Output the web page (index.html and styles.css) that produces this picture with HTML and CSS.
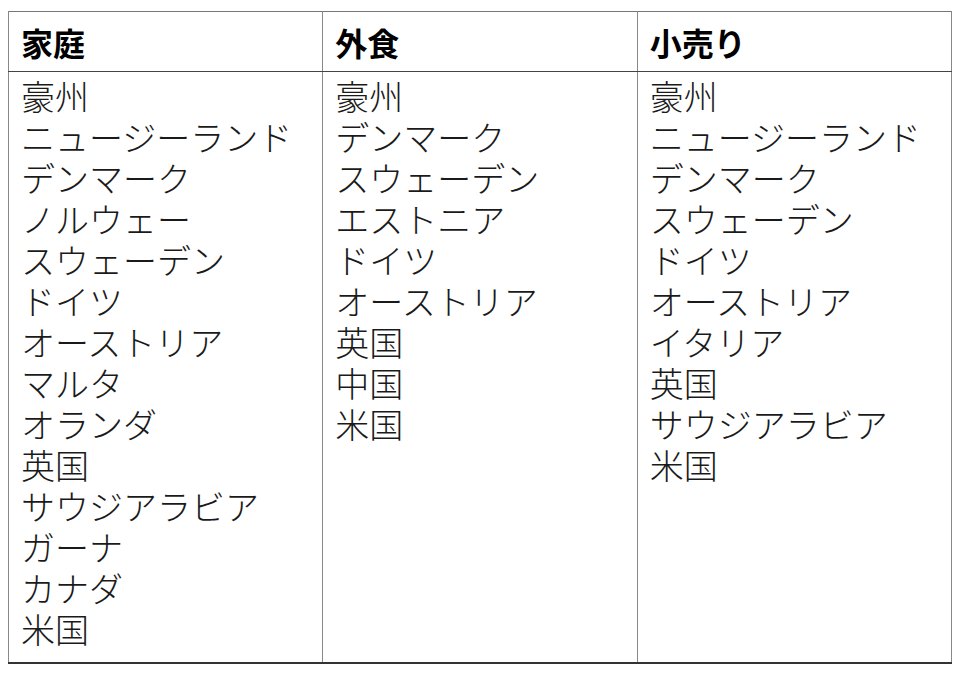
FILE: index.html
```html
<!DOCTYPE html>
<html lang="ja">
<head>
<meta charset="utf-8">
<link rel="stylesheet" href="styles.css">
</head>
<body>
<table class="grid">
  <thead>
    <tr><th>家庭</th><th>外食</th><th>小売り</th></tr>
  </thead>
  <tbody>
    <tr>
      <td>豪州<br>ニュージーランド<br>デンマーク<br>ノルウェー<br>スウェーデン<br>ドイツ<br>オーストリア<br>マルタ<br>オランダ<br>英国<br>サウジアラビア<br>ガーナ<br>カナダ<br>米国</td>
      <td>豪州<br>デンマーク<br>スウェーデン<br>エストニア<br>ドイツ<br>オーストリア<br>英国<br>中国<br>米国</td>
      <td>豪州<br>ニュージーランド<br>デンマーク<br>スウェーデン<br>ドイツ<br>オーストリア<br>イタリア<br>英国<br>サウジアラビア<br>米国</td>
    </tr>
  </tbody>
</table>
</body>
</html>
```
FILE: styles.css
```css
html, body { margin: 0; padding: 0; background: #fff; }
body { padding: 11px 8px 0 8px; font-family: "Noto Sans CJK JP", "Noto Sans", sans-serif; }
.grid {
  border-collapse: collapse;
  width: 944px;
  table-layout: fixed;
  border: 1px solid #777;
  border-bottom: 2px solid #333;
}
.grid th, .grid td {
  border-left: 1px solid #888;
  border-right: 1px solid #888;
  text-align: left;
  vertical-align: top;
  padding: 0 12px;
}
.grid th {
  height: 60px;
  box-sizing: border-box;
  font-size: 32px;
  font-weight: bold;
  color: #000;
  border-bottom: 1px solid #444;
  vertical-align: middle;
  line-height: 40px;
}
.grid td {
  font-size: 34px;
  font-weight: 300;
  color: #1a1a1a;
  line-height: 41px;
  padding-top: 3px;
  padding-bottom: 13px;
}
```
